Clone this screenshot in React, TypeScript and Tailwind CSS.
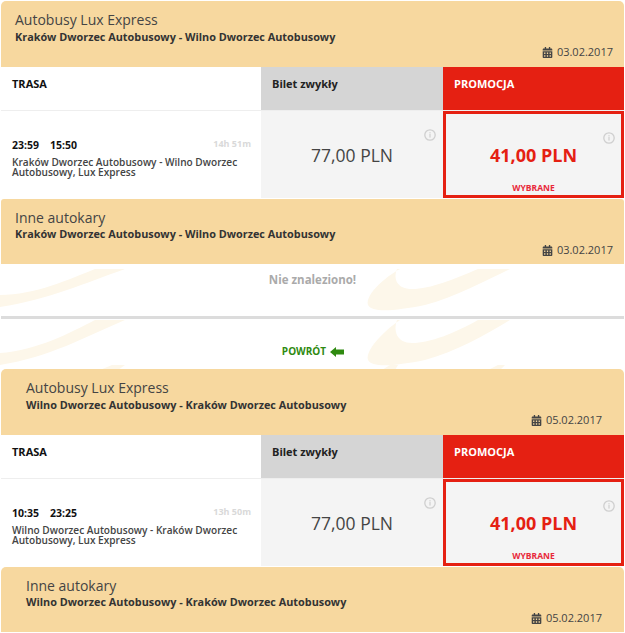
import React from 'react';
import { FaCalendarAlt } from 'react-icons/fa';

const font = { fontFamily: '"Open Sans", sans-serif' };

function InfoIcon() {
  return (
    <svg width="12" height="12" viewBox="0 0 12 12" className="block">
      <circle cx="6" cy="6" r="5.2" fill="none" stroke="#cfcfcf" strokeWidth="1.3" />
      <rect x="5.4" y="5" width="1.2" height="3.6" fill="#cfcfcf" />
      <rect x="5.4" y="3.2" width="1.2" height="1.2" fill="#cfcfcf" />
    </svg>
  );
}

function Header({ title, route, date, rounded }: { title: string; route: string; date: string; rounded: boolean }) {
  return (
    <div className={`flex h-[65px] flex-col bg-[#f7d89f] ${rounded ? 'rounded-t-[5px]' : 'rounded-t-[3px]'}`}>
      <div className="pl-[14px] pt-[9px] text-[14px] leading-[20px] text-[#444]">{title}</div>
      <div className={`pl-[14px] text-[10.85px] font-bold leading-[14px] text-[#333] ${rounded ? '' : '-mt-px'}`}>{route}</div>
      <div className={`flex items-center justify-end gap-[4px] pr-[11px] text-[11px] leading-[16px] text-[#444] ${rounded ? '' : 'mt-px'}`}>
        <FaCalendarAlt className="text-[11px] text-[#444]" />
        <span>{date}</span>
      </div>
    </div>
  );
}

function Fare({ dep, arr, duration, route }: { dep: string; arr: string; duration: string; route: string }) {
  return (
    <div className="grid grid-cols-[260px_182px_181px] text-[#222]">
      <div className="h-[43px] bg-white pl-[11px] pt-[10px] text-[11px] font-bold leading-[14px] text-[#111]">TRASA</div>
      <div className="h-[43px] bg-[#d5d5d5] pl-[11px] pt-[10px] text-[11px] font-bold leading-[14px] text-[#222]">Bilet zwykły</div>
      <div className="h-[43px] bg-[#e52012] pl-[11px] pt-[10px] text-[11px] font-bold leading-[14px] text-white">PROMOCJA</div>

      <div className="col-span-3 h-px bg-[#eeeeee]" />

      <div className="flex h-[87px] flex-col bg-white pl-[11px] pr-[10px] pt-[26px]">
        <div className="flex items-start justify-between">
          <div className="text-[10.5px] font-bold leading-[16px] text-[#111]">
            <span>{dep}</span>
            <span className="ml-[11px]">{arr}</span>
          </div>
          <div className="text-[9px] font-bold leading-[14px] text-[#d9d9d9]">{duration}</div>
        </div>
        <div className="mt-[5px] text-[10.1px] font-semibold leading-[9.5px] text-[#444]">{route}</div>
      </div>

      <div className="relative flex h-[87px] items-center justify-center bg-[#f4f4f4] pt-[1px] text-[17.5px] text-[#444]">
        77,00 PLN
        <span className="absolute right-[7px] top-[18px]"><InfoIcon /></span>
      </div>

      <div className="relative flex h-[87px] flex-col items-center border-[3px] border-[#e52012] bg-[#f4f4f4]">
        <div className="mt-[29px] text-[18px] font-bold leading-[24px] text-[#e52012]">41,00 PLN</div>
        <div className="mt-[15px] text-[8.5px] font-bold leading-[12px] text-[#e8283a]">WYBRANE</div>
        <span className="absolute right-[6px] top-[18px]"><InfoIcon /></span>
      </div>
    </div>
  );
}

function Swoosh() {
  return (
    <svg width="625" height="105" viewBox="0 0 625 105" className="absolute left-0 top-[265px] block" fill="#fdf7ea">
      <path d="M0 42 C 50 34, 85 18, 125 4 L 95 4 C 70 14, 35 30, 0 30 Z" />
      <path d="M0 100 C 50 92, 85 72, 125 55 L 95 55 C 70 68, 35 86, 0 88 Z" />
      <path d="M100 105 L 112 100 L 125 100 L 118 105 Z" />
      <path d="M510 4 L 400 4 C 385 12, 365 30, 368 40 C 372 48, 395 46, 425 40 C 455 32, 485 16, 510 4 Z M 397 4 C 393 14, 397 24, 412 24 C 430 24, 455 14, 478 4 Z" fillRule="evenodd" />
      <path d="M510 55 L 400 55 C 385 65, 365 85, 368 95 C 372 103, 395 101, 425 95 C 455 87, 485 70, 510 55 Z M 397 55 C 393 66, 397 78, 412 78 C 430 78, 455 68, 478 55 Z" fillRule="evenodd" />
      <path d="M382 105 L 390 100 L 398 100 L 395 105 Z M 488 105 L 498 100 L 505 100 L 500 105 Z" />
    </svg>
  );
}

export default function App() {
  return (
    <div style={font} className="relative h-[633px] w-[625px] overflow-hidden bg-white">
      <Swoosh />
      <div className="relative pl-[1px] pt-[1px]">
        <div className="w-[623px]">
          <Header title="Autobusy Lux Express" route="Kraków Dworzec Autobusowy - Wilno Dworzec Autobusowy" date="03.02.2017" rounded={true} />
          <div className="h-px bg-[#f7d89f]" />
          <Fare dep="23:59" arr="15:50" duration="14h 51m" route="Kraków Dworzec Autobusowy - Wilno Dworzec Autobusowy, Lux Express" />
          <div className="h-px" />
          <Header title="Inne autokary" route="Kraków Dworzec Autobusowy - Wilno Dworzec Autobusowy" date="03.02.2017" rounded={false} />
          <div className="h-[52px] pt-[8px] text-center text-[11.5px] font-bold leading-[16px] text-[#aaaaaa]">Nie znaleziono!</div>
          <div className="h-[3px] bg-[#dcdcdc]" />
        </div>

        <div className="flex h-[50px] items-center justify-center gap-[4px] pt-[15px] text-[10px] font-bold text-[#2f8a10]">
          <span>POWRÓT</span>
          <svg width="14" height="10" viewBox="0 0 14 10" fill="#2f8a10" className="block">
            <path d="M0 5 L6 0 V2.5 H14 V7.5 H6 V10 Z" />
          </svg>
        </div>

        <div className="w-[623px]">
          <Wrap>
            <Header title="Autobusy Lux Express" route="Wilno Dworzec Autobusowy - Kraków Dworzec Autobusowy" date="05.02.2017" rounded={true} />
          </Wrap>
          <div className="h-px bg-[#f7d89f]" />
          <Fare dep="10:35" arr="23:25" duration="13h 50m" route="Wilno Dworzec Autobusowy - Kraków Dworzec Autobusowy, Lux Express" />
          <div className="h-px" />
          <Wrap>
            <Header title="Inne autokary" route="Wilno Dworzec Autobusowy - Kraków Dworzec Autobusowy" date="05.02.2017" rounded={false} />
          </Wrap>
        </div>
      </div>
    </div>
  );
}

// second leg is indented a bit more than the first
function Wrap({ children }: { children: React.ReactNode }) {
  return <div className="rounded-t-[5px] bg-[#f7d89f] pl-[11px] pr-[11px]">{children}</div>;
}
